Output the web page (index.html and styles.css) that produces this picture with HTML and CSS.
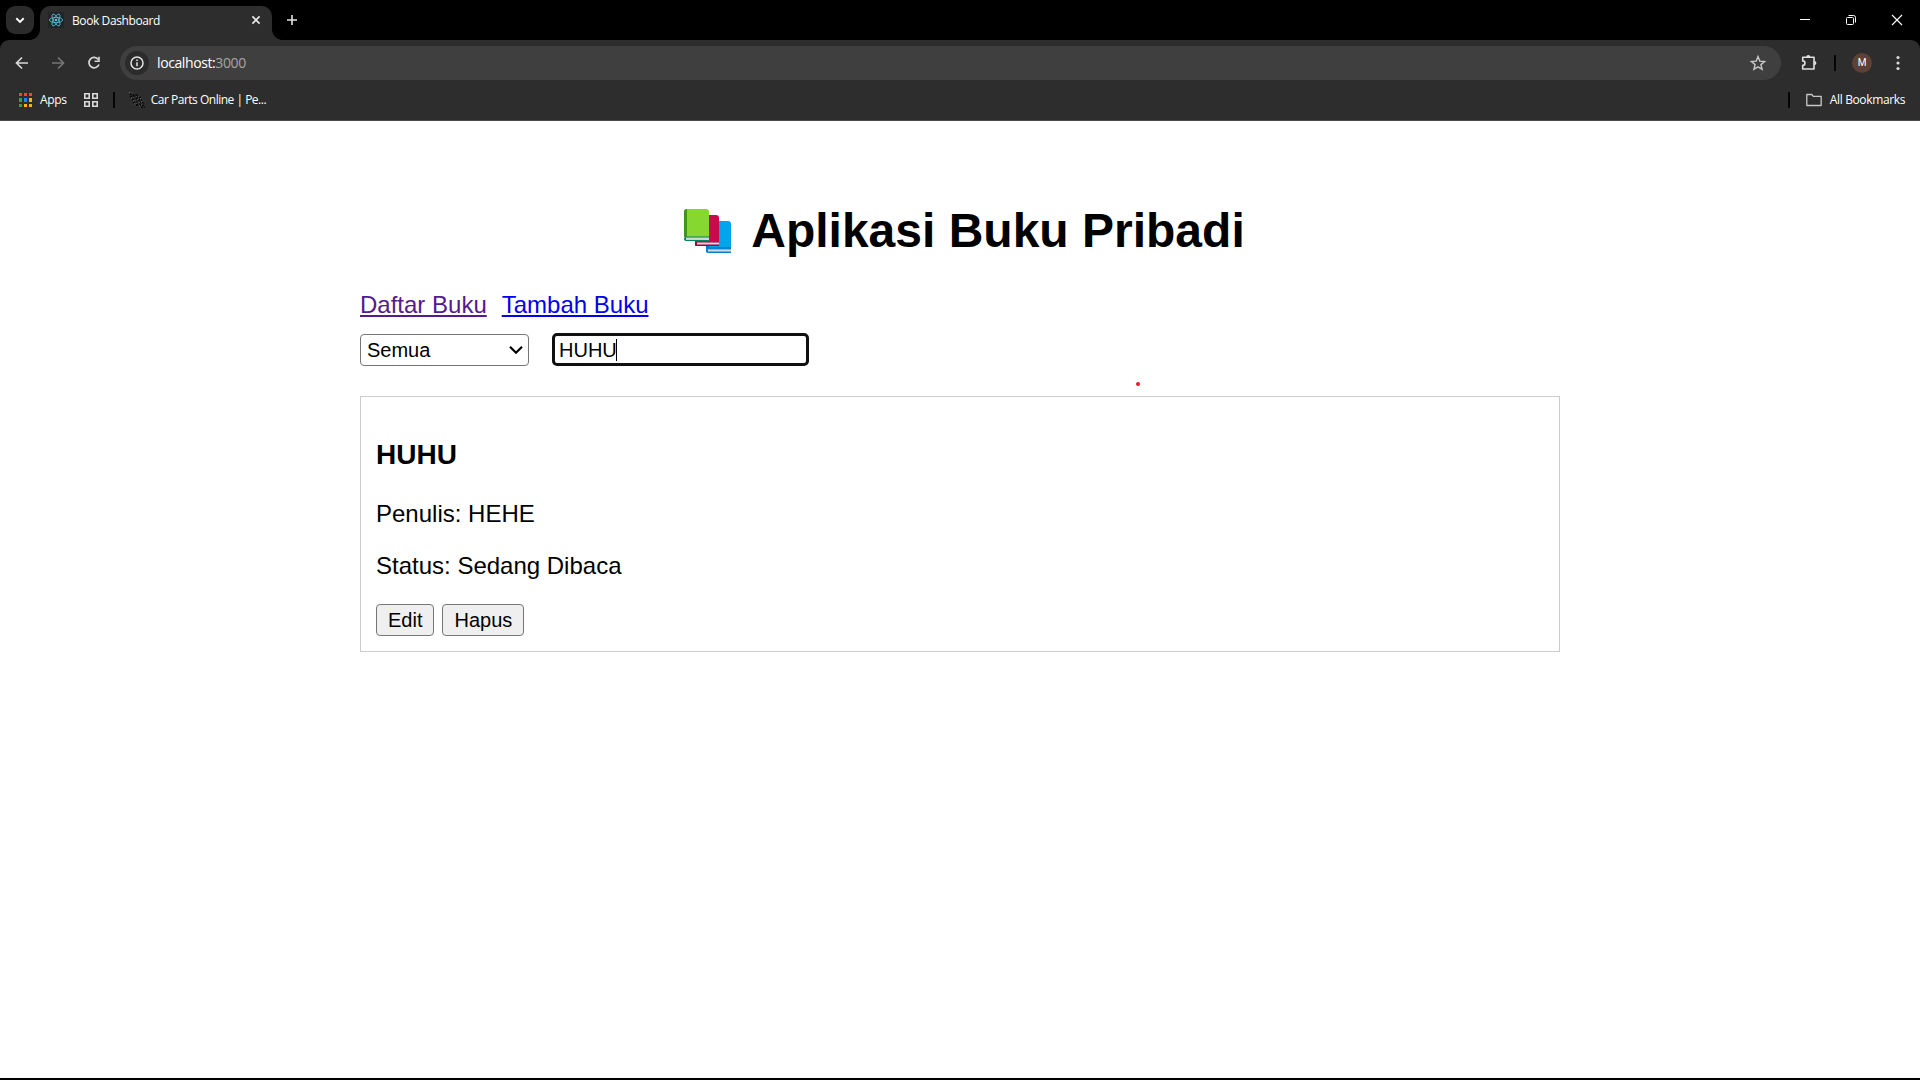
FILE: index.html
```html
<!DOCTYPE html>
<html lang="id">
<head>
<meta charset="utf-8">
<title>Book Dashboard</title>
<link rel="stylesheet" href="styles.css">
</head>
<body>
<header class="browser">
  <div class="tabstrip">
    <div class="tab-search"><svg width="28" height="28" viewBox="0 0 28 28"><path d="M10.3 12.3l3.7 3.6 3.7-3.6" fill="none" stroke="#fff" stroke-width="1.9"/></svg></div>
    <div class="tab">
      <svg class="favicon" width="16" height="16" viewBox="0 0 16 16"><rect width="16" height="16" rx="1" fill="#222528"/><g fill="none" stroke="#58c4dc" stroke-width=".8"><ellipse cx="8" cy="8" rx="6.6" ry="2.6"/><ellipse cx="8" cy="8" rx="6.6" ry="2.6" transform="rotate(60 8 8)"/><ellipse cx="8" cy="8" rx="6.6" ry="2.6" transform="rotate(120 8 8)"/></g><circle cx="8" cy="8" r="1.3" fill="#58c4dc"/></svg>
      <span class="tab-title">Book Dashboard</span>
      <svg class="tab-close" width="10" height="10" viewBox="0 0 10 10"><path d="M1.4 1.4l7.2 7.2M8.6 1.4L1.4 8.6" stroke="#e8e8e8" stroke-width="1.6"/></svg>
    </div>
    <svg class="new-tab" width="12" height="12" viewBox="0 0 12 12"><path d="M6 1v10M1 6h10" stroke="#e3e3e3" stroke-width="1.6"/></svg>
    <div class="window-buttons">
      <svg width="12" height="12" viewBox="0 0 12 12"><path d="M1 5.5h10" stroke="#fff"/></svg>
      <svg width="12" height="12" viewBox="0 0 12 12"><g fill="none" stroke="#fff"><rect x="1.5" y="3.5" width="7" height="7" rx="1"/><path d="M3.5 1.5h5a2 2 0 0 1 2 2v5"/></g></svg>
      <svg width="12" height="12" viewBox="0 0 12 12"><path d="M1 1l10 10M11 1L1 11" stroke="#fff" stroke-width="1.1"/></svg>
    </div>
  </div>
  <div class="toolbar">
    <svg class="back" width="16" height="16" viewBox="0 0 16 16"><path d="M14 8H3M8 2.5L2.5 8 8 13.5" fill="none" stroke="#d8d8d8" stroke-width="1.7"/></svg>
    <svg class="forward" width="16" height="16" viewBox="0 0 16 16"><path d="M2 8h11M8 2.5L13.5 8 8 13.5" fill="none" stroke="#757575" stroke-width="1.7"/></svg>
    <svg class="reload" width="16" height="16" viewBox="0 0 16 16"><path d="M12.3 4.4A5.2 5.2 0 1 0 13 9.5" fill="none" stroke="#d8d8d8" stroke-width="1.7"/><path d="M13.8 1.8V7H8.6V5.5h3.6V1.8z" fill="#d8d8d8"/></svg>
    <div class="omnibox">
      <span class="site-info"><svg width="16" height="16" viewBox="0 0 16 16"><circle cx="8" cy="8" r="6" fill="none" stroke="#e3e3e3" stroke-width="1.5"/><path d="M8 7.2V11.3M8 4.6V6" stroke="#e3e3e3" stroke-width="1.5"/></svg></span>
      <span class="url">localhost:<span class="port">3000</span></span>
      <svg class="star" width="18" height="18" viewBox="0 0 18 18"><path d="M9 2.6l1.8 4.5 4.8.4-3.7 3.1 1.2 4.7L9 12.8l-4.1 2.5 1.2-4.7-3.7-3.1 4.8-.4z" fill="none" stroke="#c7c7c7" stroke-width="1.4"/></svg>
    </div>
    <svg class="extensions" width="18" height="18" viewBox="0 0 18 18"><path d="M2.7 3.2H14V15H2.7V11.4A2.2 2.2 0 0 0 2.7 6.9z" fill="none" stroke="#e0e0e0" stroke-width="1.6" stroke-linejoin="round"/><path d="M6.3 3a2 2 0 0 1 4 0zM14.3 7a2 2 0 0 1 0 4.2z" fill="#e0e0e0"/></svg>
    <i class="divider"></i>
    <span class="avatar">M</span>
    <svg class="menu" width="4" height="16" viewBox="0 0 4 16" fill="#d8d8d8"><circle cx="2" cy="2.5" r="1.6"/><circle cx="2" cy="8" r="1.6"/><circle cx="2" cy="13.5" r="1.6"/></svg>
  </div>
  <div class="bookmarks">
    <svg class="apps-icon" width="14" height="14" viewBox="0 0 14 14"><path d="M0 0h3v3H0zM5 0h3v3H5zM10 0h3v3h-3z" fill="#ff4131"/><path d="M0 5h3v4H0zM0 11h3v3H0z" fill="#27a552"/><path d="M5 5h3v4H5z" fill="#1685ff"/><path d="M10 5h3v4h-3zM5 11h3v3H5zM10 11h3v3h-3z" fill="#ffb400"/></svg>
    <span class="apps-label">Apps</span>
    <svg class="groups" width="14" height="14" viewBox="0 0 14 14" fill="none" stroke="#dadada" stroke-width="1.6"><path d="M.8.8h4.4v4.4H.8zM8.8.8h4.4v4.4H8.8zM.8 8.8h4.4v4.4H.8zM8.8 8.8h4.4v4.4H8.8z"/></svg>
    <i class="divider"></i>
    <svg class="car-icon" width="16" height="16" viewBox="0 0 16 16" fill="none"><g stroke="#080808" stroke-width="1.8" stroke-dasharray="2 1"><path d="M1 1.5l4 2 5 0M1 4.5l5 1 6 0M3 7.5l10 .5M4 10.5l11 0M7 13l8 0M12 15.5l4 0"/></g><g stroke="#858585" stroke-width=".9" stroke-dasharray="1 1.5"><path d="M0 .5l5 1M2 6l9-2M4 9l9-3M5 12l10-3M10 14l5-2"/></g></svg>
    <span class="car-label">Car Parts Online | Pe...</span>
    <i class="divider divider-end"></i>
    <svg class="folder" width="16" height="14" viewBox="0 0 16 14"><path d="M.8 1.5h5l1.5 1.8h7.9v9.2H.8z" fill="none" stroke="#c7c7c7" stroke-width="1.3" stroke-linejoin="round"/></svg>
    <span class="all-label">All Bookmarks</span>
  </div>
</header>
<main class="page">
  <h1 class="title"><svg class="books" width="50" height="46" viewBox="0 0 50 46">
    <path d="M25 16a3 3 0 0 1 3-3h17q3 0 3 3v28H23z" fill="#00a6ed"/><path d="M23 17q0-4 3-4v28h-3z" fill="#0074ba"/><path d="M23 41q0-2 2-2h23v2H25v2h23v2H25q-2 0-2-2z" fill="#0084ce"/><path d="M25 41.5h23v2H25z" fill="#d8d8df"/>
    <path d="M12 10q0-3 3-3h18q3 0 3 3v28H12z" fill="#ca0b4a"/><path d="M12 34h24v4H14q-2 0-2-2z" fill="#990838"/><path d="M14 34.5h22v2H14z" fill="#d8d8df"/>
    <path d="M1 4q0-3 3-3h19q3 0 3 3v25H1z" fill="#86d72f"/><path d="M1 4q0-3 3-3v28H1z" fill="#44911b"/><path d="M1 31q0-2.5 3-2.5h22V33H3q-2 0-2-2z" fill="#008463"/><path d="M3 29.5h23V32H3z" fill="#d3d3d3"/>
  </svg>Aplikasi Buku Pribadi</h1>
  <nav class="links"><a class="visited" href="#">Daftar Buku</a><a href="#">Tambah Buku</a></nav>
  <div class="filters">
    <div class="select">Semua<svg width="14" height="10" viewBox="0 0 14 10"><path d="M1 1.8l6 6 6-6" fill="none" stroke="#000" stroke-width="2.2"/></svg></div>
    <div class="search">HUHU<i class="caret"></i></div>
    <i class="pointer-dot"></i>
  </div>
  <article class="card">
    <h3>HUHU</h3>
    <p>Penulis: HEHE</p>
    <p>Status: Sedang Dibaca</p>
    <div class="actions"><button>Edit</button><button>Hapus</button></div>
  </article>
</main>
</body>
</html>
```
FILE: styles.css
```css
* { box-sizing: border-box; }
body {
  margin: 0;
  height: 1080px;
  overflow: hidden;
  background: #fff;
  border-bottom: 2px solid #000;
  color: #000;
  font: 24px/27px "Liberation Sans", Arial, sans-serif;
}
svg { display: block; flex: none; }

/* Browser frame */
.browser {
  height: 121px;
  background: #000;
  color: #fff;
  font: 12px/16px "Open Sans", "Noto Sans", sans-serif;
}
.tabstrip { display: flex; height: 40px; padding-left: 6px; }
.tab-search { width: 28px; height: 28px; margin-top: 6px; border-radius: 9px; background: #2b2b2b; }
.tab {
  position: relative;
  display: flex;
  align-items: center;
  width: 232px;
  height: 34px;
  margin: 6px 0 0 6px;
  padding: 0 11px 6px 8px;
  border-radius: 10px 10px 0 0;
  background: #2d2d2d;
}
.tab::before, .tab::after {
  content: "";
  position: absolute;
  bottom: 0;
  width: 10px;
  height: 10px;
}
.tab::before { left: -10px; background: radial-gradient(circle at 0 0, transparent 9.5px, #2d2d2d 10px); }
.tab::after { right: -10px; background: radial-gradient(circle at 100% 0, transparent 9.5px, #2d2d2d 10px); }
.tab-title { margin-left: 8px; padding-top: 1px; letter-spacing: -.4px; white-space: nowrap; }
.tab-close { margin-left: auto; }
.new-tab { margin: 14px 0 0 14px; }
.window-buttons { display: flex; gap: 34px; margin: 14px 17px 0 auto; }
.toolbar {
  display: flex;
  align-items: center;
  height: 46px;
  padding: 0 20px 0 14px;
  border-radius: 9px 9px 0 0;
  background: #2d2d2d;
}
.forward { margin-left: 20px; }
.reload { margin-left: 20px; }
.omnibox {
  display: flex;
  align-items: center;
  width: 1662px;
  height: 34px;
  margin-left: 18px;
  padding: 0 15px 0 5px;
  border-radius: 17px;
  background: #3f3f3f;
}
.site-info { display: grid; place-items: center; width: 24px; height: 24px; border-radius: 50%; background: #2b2b2b; }
.url { margin-left: 8px; font-size: 14px; letter-spacing: -.4px; }
.port { color: #a5a5a5; }
.star { margin: 0 -1px 0 auto; }
.extensions { margin-left: 19px; }
.divider { width: 2px; height: 16px; background: #050505; }
.toolbar .divider { margin-left: 16px; }
.avatar {
  width: 20px;
  height: 20px;
  margin-left: 16px;
  border-radius: 50%;
  background: #5d4037;
  font: 10px/20px Roboto, sans-serif;
  text-align: center;
}
.menu { margin-left: 24px; }
.bookmarks {
  display: flex;
  align-items: center;
  height: 35px;
  padding: 0 15px 7px 19px;
  border-bottom: 1px solid #4a4a4a;
  background: #2d2d2d;
  white-space: nowrap;
}
.apps-label { margin-left: 7px; letter-spacing: -.3px; }
.groups { margin-left: 17px; }
.bookmarks .divider { margin-left: 15px; }
.car-icon { margin-left: 14px; }
.car-label { margin-left: 6px; letter-spacing: -.5px; }
.bookmarks .divider-end { margin-left: auto; }
.folder { margin-left: 16px; }
.all-label { margin-left: 8px; letter-spacing: -.37px; }

/* Page content */
.page { width: 1200px; margin: 0 auto; }
.title {
  display: flex;
  justify-content: center;
  margin: 0;
  padding: 82px 0 33px 8px;
  font-size: 48px;
  line-height: 55px;
}
.books { margin: 5px 18px 0 0; }
.links { display: flex; gap: 15px; }
.links a { color: #00e; }
.links .visited { color: #551a8b; }
.filters { position: relative; display: flex; gap: 23px; margin-top: 16px; font-size: 20px; line-height: 30px; }
.select {
  display: flex;
  align-items: center;
  justify-content: space-between;
  width: 169px;
  height: 32px;
  padding: 0 5px 0 6px;
  border: 1px solid #767676;
  border-radius: 4px;
}
.search {
  display: flex;
  align-items: center;
  width: 257px;
  height: 33px;
  margin-top: -1px;
  padding: 0 4px;
  border: 3px solid #101010;
  border-radius: 5px;
}
.caret { width: 1px; height: 22px; margin-left: -1px; background: #000; }
.pointer-dot { position: absolute; left: 776px; top: 48px; width: 4px; height: 4px; border-radius: 50%; background: #ed1c24; }
.card { height: 256px; margin-top: 30px; padding: 42px 15px 0; border: 1px solid #ccc; }
.card h3 { margin: 0; font-size: 28px; line-height: 32px; }
.card p { margin: 29px 0 0; }
.card p + p { margin-top: 25px; }
.actions { display: flex; gap: 8px; margin-top: 25px; }
.actions button {
  height: 32px;
  padding: 0 11px;
  border: 1px solid #767676;
  border-radius: 4px;
  background: #efefef;
  color: #000;
  font: 20px/28px "Liberation Sans", Arial, sans-serif;
}
```
